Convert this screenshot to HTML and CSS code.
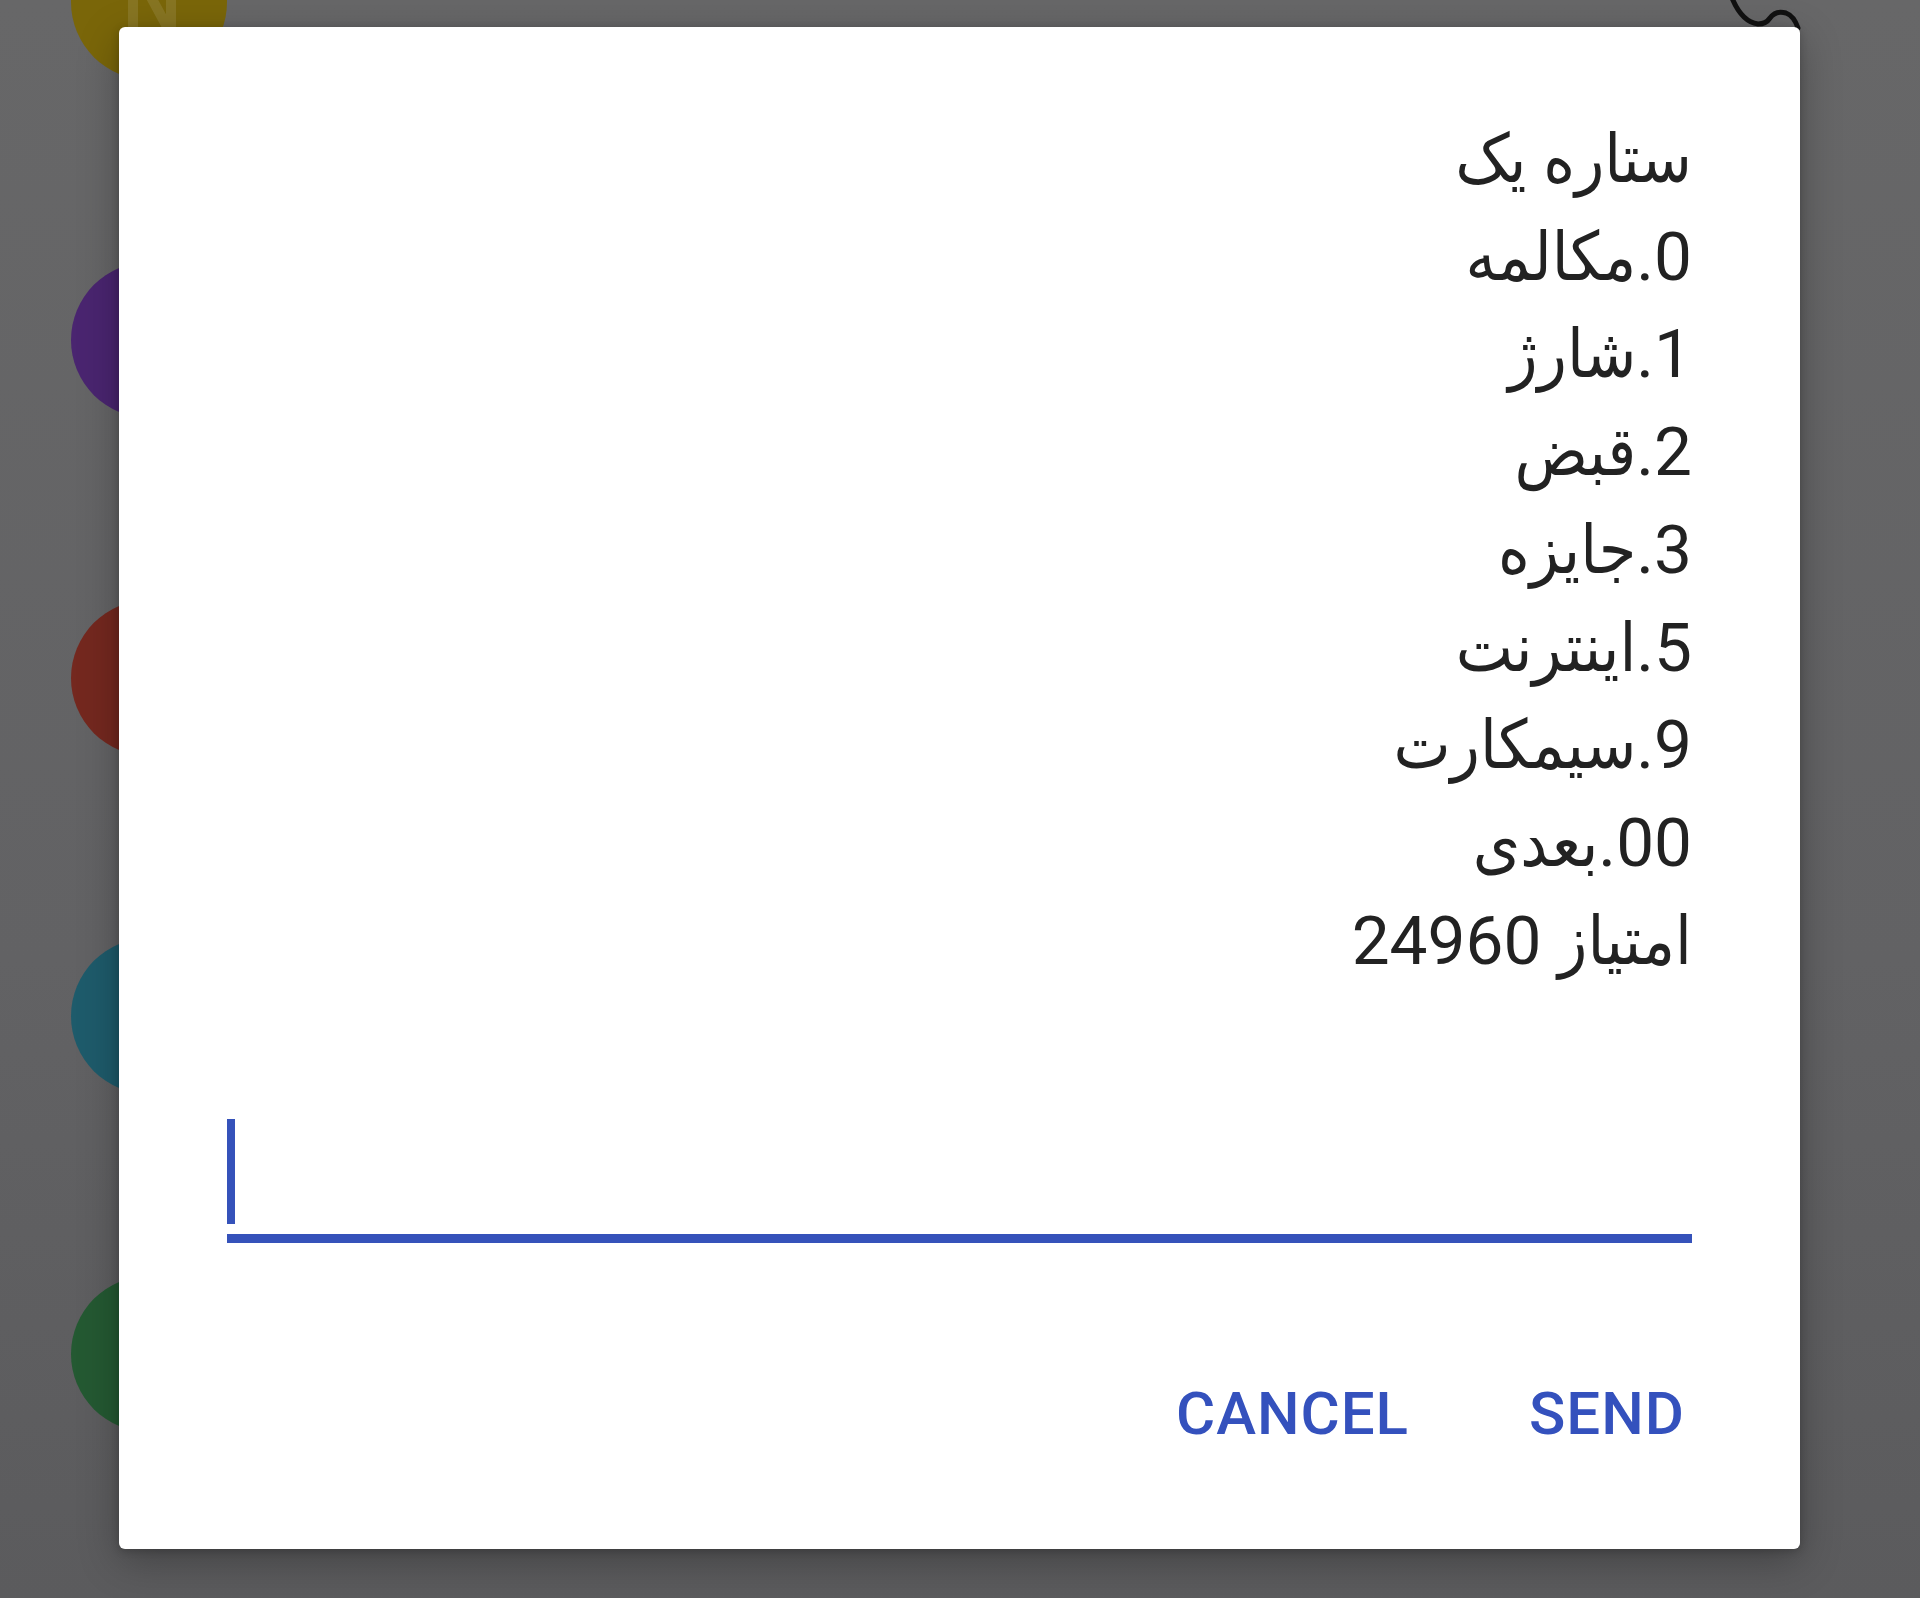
FILE: index.html
```html
<!DOCTYPE html>
<html lang="fa">
<head>
<meta charset="utf-8">
<title>Dialog</title>
<link rel="stylesheet" href="styles.css">
</head>
<body>
<div class="screen">
  <div class="list">
    <div class="row"><div class="avatar yellow">
      <svg class="avatar-icon" viewBox="0 0 156 156" width="156" height="156">
        <path d="M62 40 L62 110 M62 40 L100 110 M100 40 L100 110" fill="none" stroke="rgba(255,255,255,0.10)" stroke-width="10"/>
      </svg>
    </div></div>
    <div class="row"><div class="avatar purple"></div></div>
    <div class="row"><div class="avatar red"></div></div>
    <div class="row"><div class="avatar teal"></div></div>
    <div class="row"><div class="avatar green"></div></div>
  </div>

  <svg class="corner-icon" viewBox="0 0 90 40" width="90" height="40">
    <path d="M8 -2 Q18 22 34 24 Q42 24 46 18 Q52 10 62 13 Q70 16 74 28" fill="none" stroke="#111" stroke-width="5" stroke-linecap="round"/>
  </svg>

  <div class="dialog">
    <div class="body">
      <div class="message" dir="rtl">
        <div class="line">ستاره یک</div>
        <div class="line">0.مکالمه</div>
        <div class="line">1.شارژ</div>
        <div class="line">2.قبض</div>
        <div class="line">3.جایزه</div>
        <div class="line">5.اینترنت</div>
        <div class="line">9.سیمکارت</div>
        <div class="line">00.بعدی</div>
        <div class="line">امتیاز 24960</div>
      </div>
      <div class="field">
        <div class="cursor"></div>
        <div class="underline"></div>
      </div>
    </div>
    <div class="actions">
      <span class="btn">CANCEL</span>
      <span class="btn">SEND</span>
    </div>
  </div>
</div>
</body>
</html>
```

FILE: styles.css
```css
html, body {
  margin: 0;
  padding: 0;
}

body {
  width: 1920px;
  height: 1598px;
  overflow: hidden;
  background: #636365;
  font-family: Roboto, "DejaVu Sans", sans-serif;
}

.screen {
  position: relative;
  width: 1920px;
  height: 1598px;
  background: linear-gradient(180deg, #676768 0%, #626264 60%, #5b5b5d 100%);
  overflow: hidden;
}

.list {
  display: flex;
  flex-direction: column;
  margin-top: -76px;
  padding-left: 71px;
}

.row {
  height: 338px;
}

.avatar {
  width: 156px;
  height: 156px;
  border-radius: 50%;
  position: relative;
}

.avatar-icon {
  display: block;
}

.yellow { background: #7a6609; }
.purple { background: #4a2570; }
.red { background: #74281f; }
.teal { background: #1e5b6b; }
.green { background: #245932; }

.corner-icon {
  position: absolute;
  left: 1724px;
  top: 0;
}

.dialog {
  position: absolute;
  left: 119px;
  top: 27px;
  width: 1681px;
  height: 1522px;
  background: #ffffff;
  border-radius: 6px;
  box-shadow: 0 12px 40px rgba(0, 0, 0, 0.28), 0 2px 8px rgba(0, 0, 0, 0.2);
  display: flex;
  flex-direction: column;
}

.body {
  padding: 83px 108px 0;
}

.message {
  direction: rtl;
  text-align: right;
  color: #222222;
  font-family: Roboto, "DejaVu Sans Condensed", "DejaVu Sans", sans-serif;
  font-size: 67.5px;
  line-height: 97.7px;
}

.line {
  white-space: nowrap;
}

.field {
  margin-top: 130px;
}

.cursor {
  width: 8px;
  height: 105px;
  background: #3552ba;
}

.underline {
  margin-top: 10px;
  height: 9px;
  background: #3552ba;
}

.actions {
  display: flex;
  justify-content: flex-end;
  gap: 120px;
  padding-right: 115px;
  margin-top: 141px;
}

.btn {
  font-family: Roboto, "Liberation Sans", sans-serif;
  font-weight: 500;
  font-size: 60px;
  line-height: 60px;
  letter-spacing: 1px;
  color: #3451bd;
}
```
